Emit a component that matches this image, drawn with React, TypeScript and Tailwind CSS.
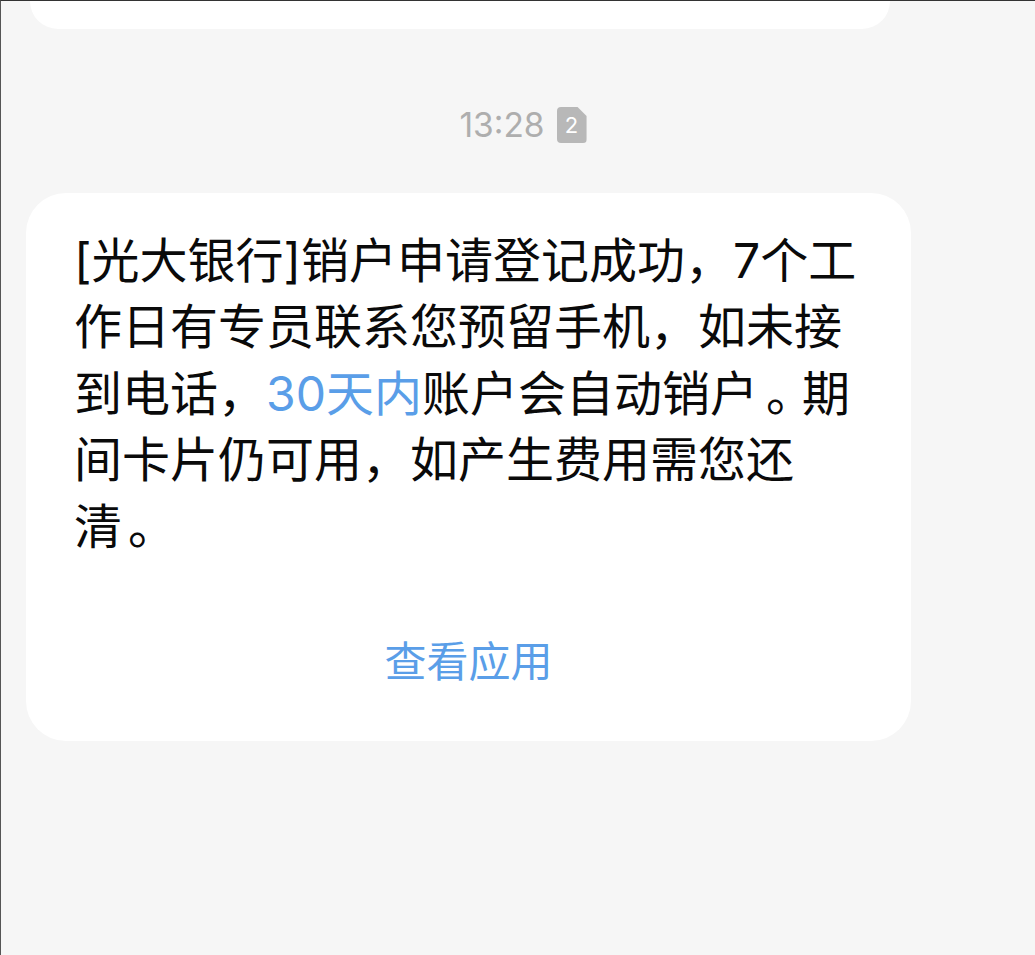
const FONT = "font-['Inter','Noto_Sans_CJK_SC',sans-serif]";

function TimeStamp() {
  return (
    <div className="mt-[76px] flex h-[40px] items-center justify-center pl-[10px]">
      <span className="text-[33.5px] leading-[40px] text-[#aeaeae]">13:28</span>
      <span
        className="ml-[12px] flex h-[36px] w-[30px] items-center justify-center rounded-[4px] bg-[#b8b8b8] text-[22px] leading-none text-white [clip-path:polygon(0_0,70%_0,100%_25%,100%_100%,0_100%)]"
      >
        2
      </span>
    </div>
  );
}

export default function App() {
  return (
    <div className={`${FONT} h-[955px] w-[1035px] overflow-hidden border-t border-l border-t-[#333333] border-l-[#555555] bg-[#f6f6f6]`}>
      <div className="ml-[29px] h-[28px] w-[860px] rounded-b-[36px] bg-white" />
      <TimeStamp />
      <div className="mt-[48px] ml-[25px] h-[548px] w-[885px] rounded-[40px] bg-white pt-[35px] pl-[48px]">
        <p className="text-[48px] leading-[66.4px] whitespace-nowrap text-[#0a0a0a]">
          [光大银行]销户申请登记成功，7个工
          <br />
          作日有专员联系您预留手机，如未接
          <br />
          到电话，<span className="text-[#5a9ee8]">30天内</span>账户会自动销户
          <span className="ml-[8px] tracking-[-12px]">。</span>期
          <br />
          间卡片仍可用，如产生费用需您还
          <br />
          清<span className="ml-[6px]">。</span>
        </p>
        <div className="mt-[74px] pr-[48px] text-center text-[42px] leading-[56px] text-[#5a9ee8]">查看应用</div>
      </div>
    </div>
  );
}
